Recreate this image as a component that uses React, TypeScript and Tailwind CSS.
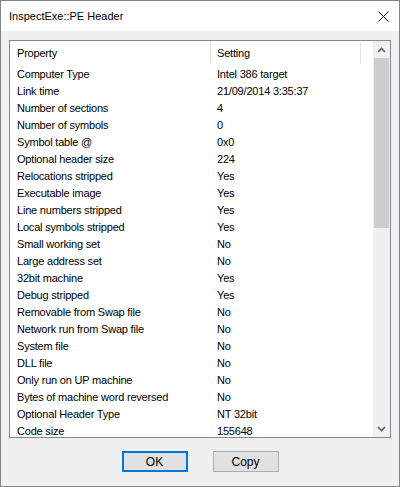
import React from 'react';

const rows: [string, string][] = [
  ['Computer Type', 'Intel 386 target'],
  ['Link time', '21/09/2014 3:35:37'],
  ['Number of sections', '4'],
  ['Number of symbols', '0'],
  ['Symbol table @', '0x0'],
  ['Optional header size', '224'],
  ['Relocations stripped', 'Yes'],
  ['Executable image', 'Yes'],
  ['Line numbers stripped', 'Yes'],
  ['Local symbols stripped', 'Yes'],
  ['Small working set', 'No'],
  ['Large address set', 'No'],
  ['32bit machine', 'Yes'],
  ['Debug stripped', 'Yes'],
  ['Removable from Swap file', 'No'],
  ['Network run from Swap file', 'No'],
  ['System file', 'No'],
  ['DLL file', 'No'],
  ['Only run on UP machine', 'No'],
  ['Bytes of machine word reversed', 'No'],
  ['Optional Header Type', 'NT 32bit'],
  ['Code size', '155648'],
];

const Chevron = ({ down }: { down?: boolean }) => (
  <svg width="9" height="6" viewBox="0 0 9 6" className={down ? 'rotate-180' : ''}>
    <path d="M1 5 L4.5 1.5 L8 5" fill="none" stroke="#606060" strokeWidth="1.6" />
  </svg>
);

const App = () => {
  return (
    <div className="w-[400px] h-[487px] border border-[#858585] bg-[#f0f0f0] flex flex-col text-[11px] text-black font-['Liberation_Sans',Arial,sans-serif]">
      {/* title bar */}
      <div className="h-[30px] bg-white flex items-center justify-between pl-2 pr-[10px] shrink-0">
        <span className="text-[11px] leading-none">InspectExe::PE Header</span>
        <svg width="11" height="11" viewBox="0 0 11 11">
          <path d="M0.5 0.5 L10.5 10.5 M10.5 0.5 L0.5 10.5" stroke="#111" strokeWidth="1" />
        </svg>
      </div>

      <div className="flex-1 px-2 pt-[9px] flex flex-col">
        <div className="h-[398px] border border-[#828790] bg-white flex">
          <div className="flex-1 overflow-hidden tracking-[-0.2px]">
            <div className="h-[23px] flex">
              <div className="w-[201px] border-r border-[#e5e5e5] pl-[7px] leading-[25px]">Property</div>
              <div className="w-[150px] border-r border-[#e5e5e5] pl-[6px] leading-[25px]">Setting</div>
            </div>
            {rows.map(([k, v]) => (
              <div key={k} className="h-[17px] flex leading-[20px]">
                <div className="w-[201px] pl-[7px] whitespace-nowrap">{k}</div>
                <div className="pl-[6px] whitespace-nowrap">{v}</div>
              </div>
            ))}
          </div>
          <div className="w-[17px] bg-[#f0f0f0] flex flex-col shrink-0">
            <div className="h-[17px] flex items-center justify-center">
              <Chevron />
            </div>
            <div className="h-[170px] mx-[1px] bg-[#cdcdcd]" />
            <div className="flex-1" />
            <div className="h-[17px] flex items-center justify-center">
              <Chevron down />
            </div>
          </div>
        </div>

        <div className="mt-[13px] flex justify-center gap-[25px]">
          <button className="w-[66px] h-[21px] border-2 border-[#0078d7] bg-[#e1e1e1] text-[12px] leading-none">
            OK
          </button>
          <button className="w-[66px] h-[21px] border border-[#adadad] bg-[#e1e1e1] text-[12px] leading-none">
            Copy
          </button>
        </div>
      </div>
    </div>
  );
};

export default App;
